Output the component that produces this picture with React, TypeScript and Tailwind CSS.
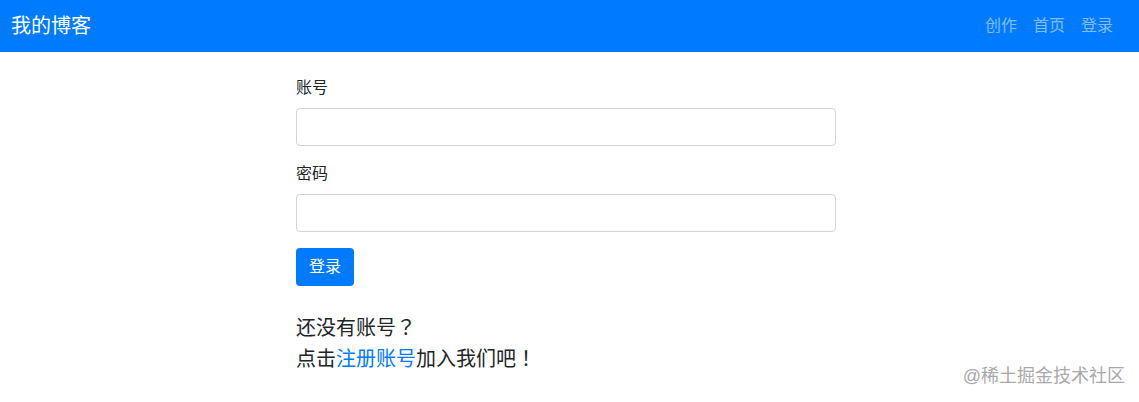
import { useState } from "react"

const font = { fontFamily: '"Liberation Sans", "Noto Sans CJK SC", sans-serif' }

export default function App() {
    const [account, setAccount] = useState("")
    const [password, setPassword] = useState("")

    return (
        <div className="relative h-[402px] bg-white text-[#212529]" style={font}>
            {/* Navbar */}
            <nav className="flex h-[52px] items-center justify-between bg-[#007bff] pl-[11px] pr-[26px]">
                <a className="text-[20px] leading-[30px] text-white">我的博客</a>
                <div className="flex gap-4 text-[16px] text-[rgba(255,255,255,0.5)]">
                    <a>创作</a>
                    <a>首页</a>
                    <a>登录</a>
                </div>
            </nav>

            {/* Login form */}
            <div className="ml-[296px] mt-6 w-[540px]">
                <div className="mb-4">
                    <label className="mb-2 block text-[16px] leading-6">账号</label>
                    <input
                        value={account}
                        onChange={(e) => setAccount(e.target.value)}
                        className="block h-[38px] w-full rounded border border-[#ced4da] px-3 outline-none"
                    />
                </div>
                <div className="mb-4">
                    <label className="mb-2 block text-[16px] leading-6">密码</label>
                    <input
                        type="password"
                        value={password}
                        onChange={(e) => setPassword(e.target.value)}
                        className="block h-[38px] w-full rounded border border-[#ced4da] px-3 outline-none"
                    />
                </div>
                <button className="h-[38px] w-[58px] rounded bg-[#007bff] text-[16px] text-white">登录</button>

                {/* TC font centres the full-width ？ and ！ like the original */}
                <div lang="zh-CN" className="mt-[25px] font-['Noto_Sans_CJK_SC',sans-serif] text-[20px] leading-[31px]">
                    <p>
                        还没有账号<span lang="zh-TW" className="font-['Noto_Sans_CJK_TC',sans-serif]">？</span>
                    </p>
                    <p>
                        点击<a className="text-[#007bff]">注册账号</a>加入我们吧
                        <span lang="zh-TW" className="font-['Noto_Sans_CJK_TC',sans-serif]">！</span>
                    </p>
                </div>
            </div>

            {/* watermark */}
            <div className="absolute bottom-[14px] right-[14px] text-[18px] leading-6 text-[#a9a9a9]">@稀土掘金技术社区</div>
        </div>
    )
}
